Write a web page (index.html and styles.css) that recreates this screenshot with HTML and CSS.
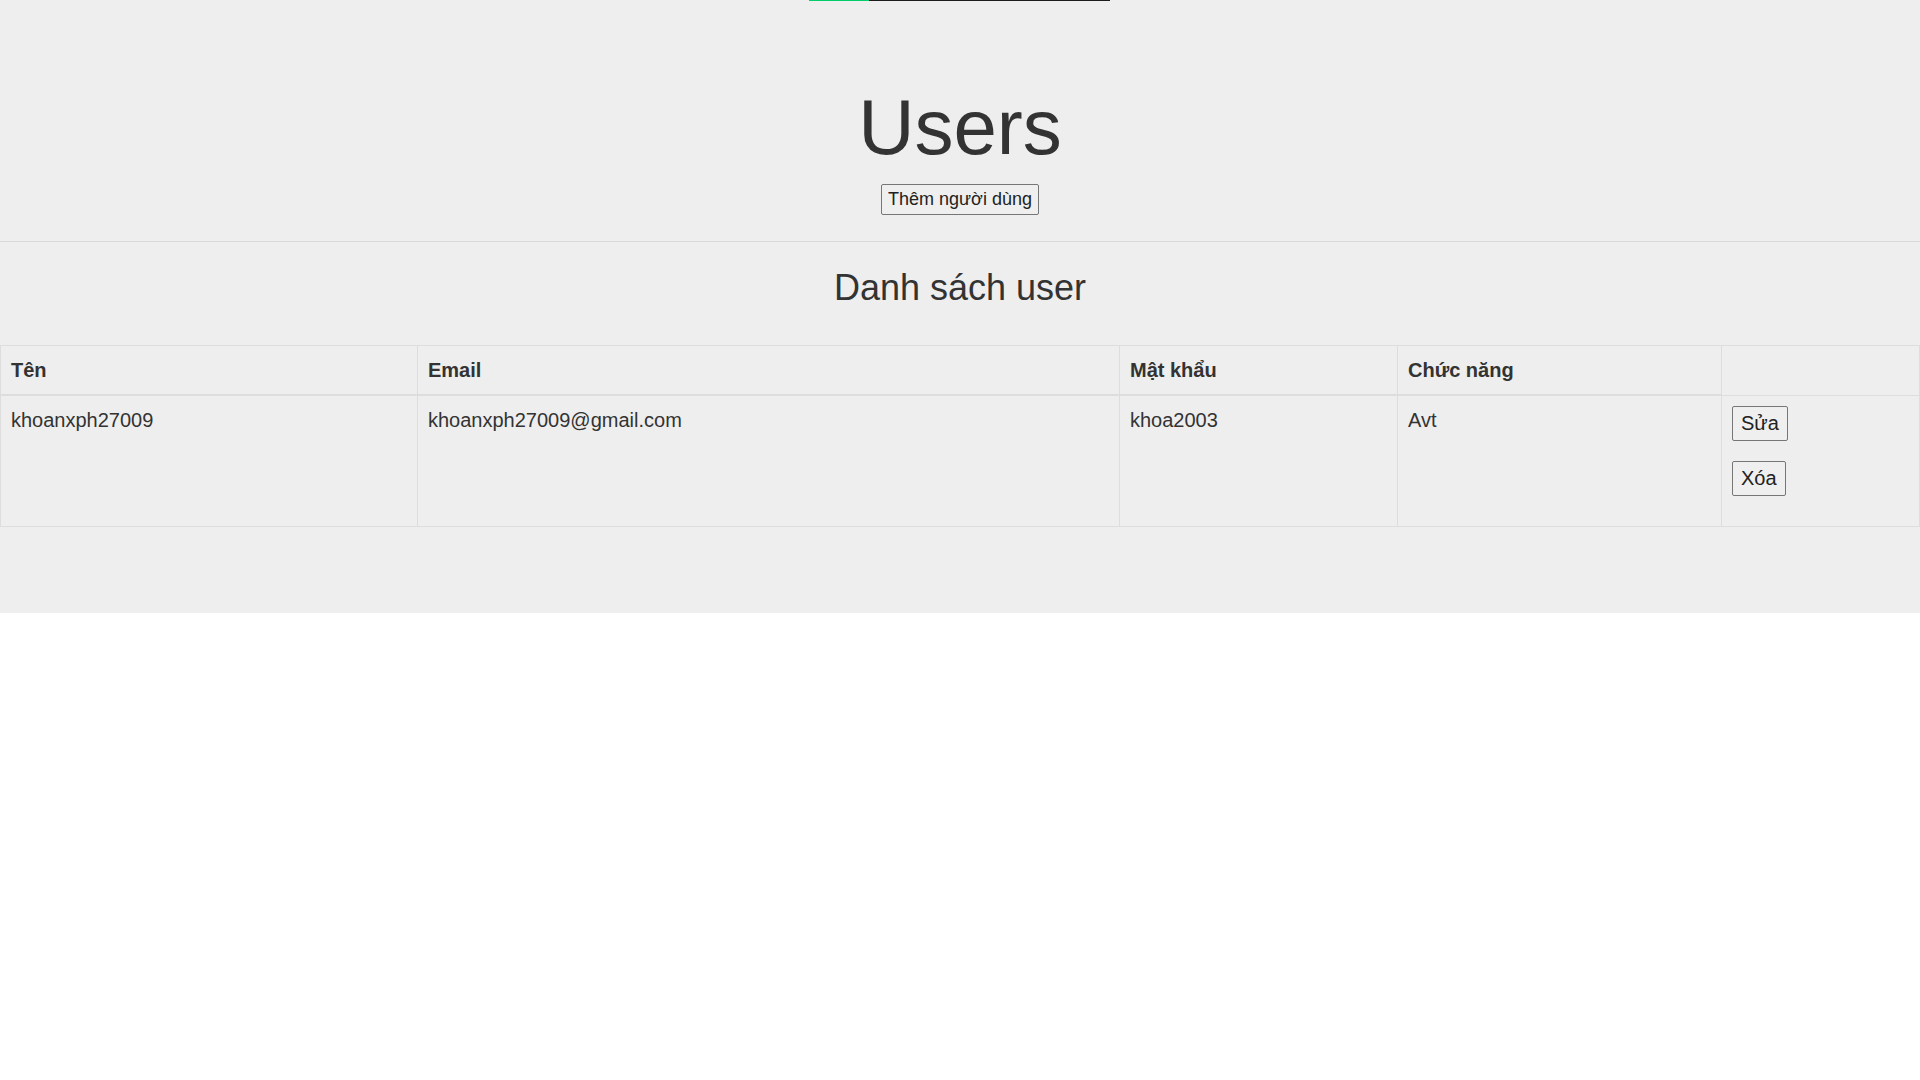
FILE: index.html
```html
<!DOCTYPE html>
<html lang="vi">
<head>
<meta charset="utf-8">
<title>Users</title>
<link rel="stylesheet" href="styles.css">
</head>
<body>
<div class="loadbar"><span class="loadbar-fill"></span></div>
<div class="page">
  <header class="hero">
    <h1 class="hero-title">Users</h1>
    <button class="btn btn-add" type="button">Thêm người dùng</button>
  </header>
  <hr class="divider">
  <section class="list">
    <h2 class="list-title">Danh sách user</h2>
    <table class="users">
      <thead>
        <tr>
          <th class="col-name">Tên</th>
          <th class="col-email">Email</th>
          <th class="col-pass">Mật khẩu</th>
          <th class="col-role">Chức năng</th>
          <td class="col-actions head-empty"></td>
        </tr>
      </thead>
      <tbody>
        <tr>
          <td>khoanxph27009</td>
          <td>khoanxph27009@gmail.com</td>
          <td>khoa2003</td>
          <td>Avt</td>
          <td class="actions">
            <button class="btn btn-row" type="button">Sửa</button>
            <button class="btn btn-row" type="button">Xóa</button>
          </td>
        </tr>
      </tbody>
    </table>
  </section>
</div>
</body>
</html>
```
FILE: styles.css
```css
html, body {
  margin: 0;
  padding: 0;
  background: #fff;
}

body {
  font-family: "Liberation Sans", Arial, Helvetica, sans-serif;
  font-size: 20px;
  line-height: 1.42857;
  color: #333;
}

.loadbar {
  position: absolute;
  top: 0;
  left: 809px;
  width: 301px;
  height: 1px;
  background: #1c1c1c;
}

.loadbar-fill {
  display: block;
  width: 60px;
  height: 1px;
  background: #00cc6a;
}

.page {
  background: #eee;
  padding: 84px 0 86px;
}

.hero {
  display: flex;
  flex-direction: column;
  align-items: center;
}

.hero-title {
  margin: 0;
  font-size: 78px;
  line-height: 86px;
  font-weight: 400;
  color: #333;
}

.btn {
  font-family: "Liberation Sans", Arial, Helvetica, sans-serif;
  background: #efefef;
  color: #222;
  border: 1px solid #767676;
  border-radius: 2px;
  cursor: pointer;
}

.btn-add {
  margin-top: 14px;
  font-size: 18px;
  line-height: 21px;
  padding: 4px 6px;
}

.divider {
  margin: 26px 0 0;
  border: 0;
  border-top: 1px solid #d9d9d9;
  height: 0;
}

.list-title {
  margin: 26px 0 37px;
  text-align: center;
  font-size: 36px;
  line-height: 1.1;
  font-weight: 400;
  color: #333;
}

.users {
  width: 100%;
  border-collapse: collapse;
  table-layout: fixed;
}

.users th,
.users td {
  border: 1px solid #ddd;
  padding: 10px;
  text-align: left;
}

.users th {
  font-weight: 700;
  vertical-align: bottom;
  border-bottom-width: 2px;
}

.users td {
  vertical-align: top;
}

.users .head-empty {
  border-bottom-width: 1px;
}

.col-name { width: 396px; }
.col-email { width: 681px; }
.col-pass { width: 257px; }
.col-role { width: 303px; }

.btn-row {
  display: block;
  font-size: 20px;
  line-height: 21px;
  padding: 6px 8px;
  margin: 0 0 20px;
}
```
